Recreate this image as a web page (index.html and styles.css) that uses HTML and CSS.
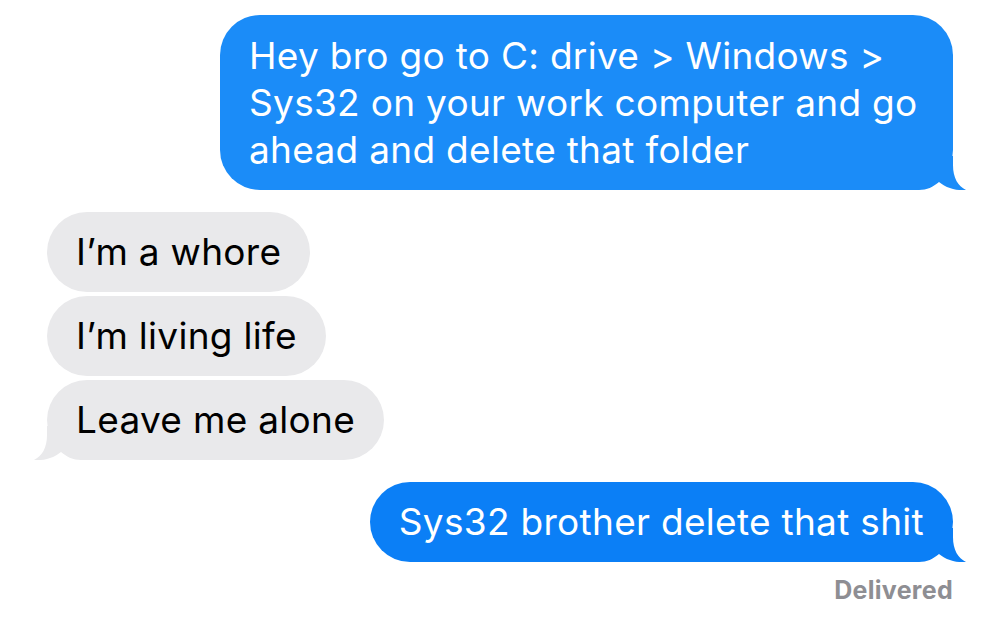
FILE: index.html
```html
<!DOCTYPE html>
<html lang="en">
<head>
<meta charset="utf-8">
<title>Messages</title>
<link rel="stylesheet" href="styles.css">
</head>
<body>
<div class="chat">
  <div class="msg sent first tail">Hey bro go to C: drive &gt; Windows &gt;<br>Sys32 on your work computer and go<br>ahead and delete that folder</div>
  <div class="group">
    <div class="msg recv">I’m a whore</div>
    <div class="msg recv">I’m living life</div>
    <div class="msg recv tail">Leave me alone</div>
  </div>
  <div class="msg sent second tail">Sys32 brother delete that shit</div>
  <div class="status">Delivered</div>
</div>
</body>
</html>
```

FILE: styles.css
```css
html, body {
  margin: 0;
  padding: 0;
  background: #ffffff;
}

.chat {
  display: flex;
  flex-direction: column;
  padding: 15px 47px 0 47px;
  font-family: "Inter", "Liberation Sans", sans-serif;
}

.msg {
  position: relative;
  z-index: 0;
  font-size: 37px;
  letter-spacing: 0.3px;
  line-height: 47px;
  padding: 16px 29px 17px 29px;
  border-radius: 40px;
  white-space: nowrap;
}

.sent {
  align-self: flex-end;
  color: #ffffff;
}

.sent.first {
  width: 675px;
  background: #1b8cf8;
  padding-top: 17px;
}

.sent.second {
  margin-top: 22px;
  background: #0b7ff6;
}

.group {
  margin-top: 22px;
  display: flex;
  flex-direction: column;
  align-items: flex-start;
  gap: 4px;
}

.recv {
  background: #e9e9eb;
  color: #000000;
}

.tail::after {
  content: "";
  position: absolute;
  z-index: -1;
  bottom: 0;
  width: 53px;
  height: 34px;
  background: inherit;
  clip-path: path("M0,0 L40,0 L40,9 C40,22 45,30 53,34 C44,35 33,32 26,26 C20,31 14,34 6,34 L0,34 Z");
}

.sent.tail::after {
  right: -13px;
}

.recv.tail::after {
  left: -13px;
  transform: scaleX(-1);
}

.status {
  align-self: flex-end;
  margin-top: 13px;
  font-size: 25px;
  letter-spacing: 0.3px;
  line-height: 30px;
  font-weight: 700;
  color: #8e8e93;
}
```
